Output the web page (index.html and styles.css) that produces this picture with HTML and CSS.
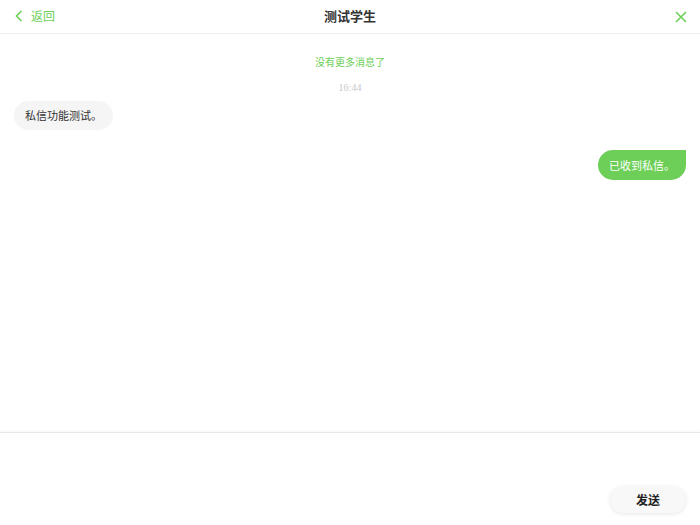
FILE: index.html
```html
<!DOCTYPE html>
<html lang="zh">
<head>
    <meta charset="UTF-8">
    <meta name="viewport" content="width=device-width, initial-scale=1.0">
    <title>测试学生</title>
    <link rel="stylesheet" href="styles.css">
</head>
<body>
    <div class="page">
        <header class="topbar">
            <a class="back" href="#">
                <svg width="8" height="12" viewBox="0 0 8 12"><path d="M6.5 1 L1.5 6 L6.5 11" fill="none" stroke="#6dcf57" stroke-width="1.6"/></svg>
                <span>返回</span>
            </a>
            <div class="title">测试学生</div>
            <a class="close" href="#">
                <svg width="12" height="12" viewBox="0 0 12 12"><path d="M1 1 L11 11 M11 1 L1 11" fill="none" stroke="#6dcf57" stroke-width="1.6"/></svg>
            </a>
        </header>
        <main class="messages">
            <div class="nomore">没有更多消息了</div>
            <div class="time">16:44</div>
            <div class="row left">
                <div class="bubble">私信功能测试。</div>
            </div>
            <div class="row right">
                <div class="bubble">已收到私信。</div>
            </div>
        </main>
        <footer class="composer">
            <button class="send">发送</button>
        </footer>
    </div>
</body>
</html>
```

FILE: styles.css
```css
html, body {
    margin: 0;
    padding: 0;
}
body {
    background: #fff;
    color: #333;
    font-family: "Noto Sans CJK SC", "Noto Sans", sans-serif;
}
.page {
    display: flex;
    flex-direction: column;
    height: 525px;
}
.topbar {
    height: 32px;
    border-bottom: 1px solid #eee;
    display: flex;
    align-items: center;
    justify-content: space-between;
    padding: 0 12px 2px 15px;
    box-sizing: content-box;
    height: 31px;
    position: relative;
}
.back {
    display: flex;
    align-items: center;
    gap: 8px;
    color: #6dcf57;
    text-decoration: none;
    font-size: 12px;
    line-height: 14px;
}
.title {
    position: absolute;
    left: 0;
    right: 0;
    text-align: center;
    font-size: 13px;
    font-weight: bold;
    color: #333;
    pointer-events: none;
}
.close {
    display: flex;
    align-items: center;
    padding-right: 1px;
    margin-top: 3px;
}
.messages {
    flex: 1;
    padding: 0 14px;
}
.nomore {
    text-align: center;
    color: #6dcf57;
    font-size: 10px;
    margin-top: 20px;
    line-height: 16px;
}
.time {
    text-align: center;
    color: #c8c8c8;
    font-size: 10px;
    font-family: "Liberation Serif", serif;
    margin-top: 11px;
    line-height: 14px;
}
.row {
    display: flex;
}
.row.left {
    margin-top: 6px;
}
.row.right {
    justify-content: flex-end;
    margin-top: 20px;
}
.bubble {
    font-size: 11px;
    line-height: 29px;
    padding: 0 11px;
    border-radius: 15px;
}
.left .bubble {
    background: #f5f5f5;
    color: #333;
}
.right .bubble {
    background: #6dcf57;
    color: #fff;
    border-top-right-radius: 0;
    line-height: 30px;
}
.composer {
    height: 93px;
    border-top: 1px solid #e8e8e8;
    box-shadow: 0 -1px 3px rgba(0, 0, 0, 0.04);
    display: flex;
    align-items: flex-end;
    justify-content: flex-end;
    padding: 0 14px 12px 0;
    box-sizing: border-box;
}
.send {
    width: 76px;
    height: 27px;
    border: none;
    border-radius: 14px;
    background: #f8f8f8;
    box-shadow: 0 1px 4px rgba(0, 0, 0, 0.1);
    font-family: "Noto Sans CJK SC", sans-serif;
    font-size: 12px;
    font-weight: bold;
    color: #222;
}
```
